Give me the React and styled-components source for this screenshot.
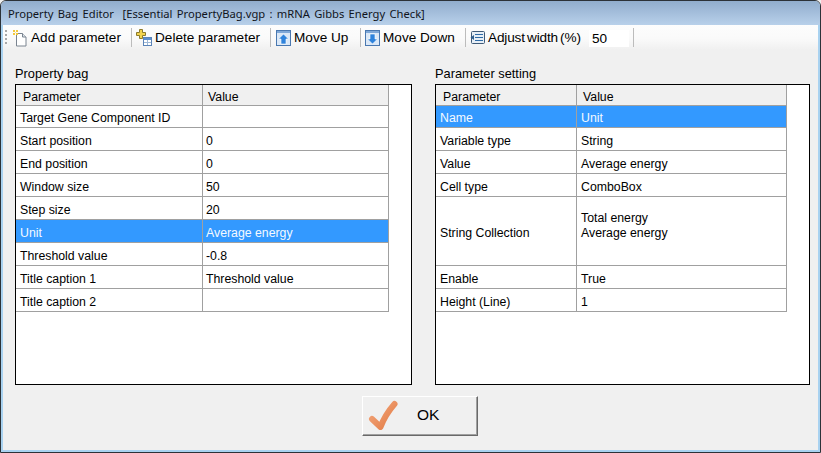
import React from 'react';
import styled, { createGlobalStyle } from 'styled-components';

const GlobalStyle = createGlobalStyle`
    html, body {
        margin: 0;
        padding: 0;
        background: #f0f0f0;
    }
`;

const Window = styled.div`
    width: 821px;
    height: 453px;
    box-sizing: border-box;
    border: 1px solid #2c3238;
    border-radius: 6px 6px 0 0;
    overflow: hidden;
    display: flex;
    flex-direction: column;
    font-family: "Liberation Sans", Arial, sans-serif;
    color: #000;
    background: #f0f0f0;
`;

const TitleBar = styled.div`
    height: 24px;
    flex: none;
    display: flex;
    align-items: center;
    padding-left: 7px;
    font-family: "Noto Sans", sans-serif;
    font-size: 11.2px;
    word-spacing: 1.4px;
    color: #10141c;
    white-space: pre;
    background: linear-gradient(#91adcd, #b8d0ea);
`;

const Frame = styled.div`
    flex: 1;
    display: flex;
    flex-direction: column;
    border: 2px solid #a9d2f0;
    border-top: 0;
`;

const Toolbar = styled.div`
    height: 25px;
    flex: none;
    display: flex;
    align-items: center;
    padding-left: 2px;
    font-size: 13.6px;
    background: linear-gradient(#fdfdfd 0%, #fafafa 55%, #f0f0f0 100%);
`;

const Grip = styled.div`
    width: 2px;
    height: 16px;
    margin-right: 5px;
    background: repeating-linear-gradient(#a8a8a8 0 2px, transparent 2px 4px);
`;

const ToolButton = styled.div`
    display: flex;
    align-items: center;
    gap: ${p => p.$gap || 3}px;
    width: ${p => p.$width}px;
    padding-left: ${p => p.$inset || 0}px;
    word-spacing: ${p => p.$wordSpacing || 0}px;
    letter-spacing: ${p => p.$tracking || 0}px;
    white-space: nowrap;
`;

const Separator = styled.div`
    width: 1px;
    height: 19px;
    margin: 0 4px;
    flex: none;
    background: #bcbcbc;
`;

const WidthInput = styled.div`
    width: 37px;
    height: 17px;
    margin-top: 2px;
    padding-left: 3px;
    line-height: 17px;
    background: #fff;
`;

const Panels = styled.div`
    display: grid;
    grid-template-columns: 397px 375px;
    column-gap: 23px;
    padding: 15px 0 0 12px;
`;

const Panel = styled.div`
    display: flex;
    flex-direction: column;
`;

const PanelLabel = styled.div`
    height: 19px;
    font-size: 12.8px;
    line-height: 17px;
`;

const GridBox = styled.div`
    height: 301px;
    box-sizing: border-box;
    border: 1px solid #000;
    background: #fff;
`;

const Row = styled.div`
    display: grid;
    grid-template-columns: ${p => p.$columns};
    width: max-content;
    height: ${p => p.$height || 23}px;
    box-sizing: border-box;
    border-bottom: 1px solid #a0a0a0;
    font-size: 12.3px;
    color: ${p => (p.$selected ? '#f4f9ff' : '#000')};
    background: ${p => (p.$selected ? '#3399ff' : '#fff')};

    &:nth-child(2) {
        height: 23px;
        border-top: 1px solid #a0a0a0;
    }
`;

const HeaderRow = styled(Row)`
    height: 20px;
    border-bottom: 0;
    background: #f0f0f0;
`;

const Cell = styled.div`
    display: flex;
    align-items: center;
    box-sizing: border-box;
    padding: 4px 0 ${p => p.$bottom || 0}px ${p => p.$inset || 4}px;
    line-height: 15px;
    border-right: 1px solid #a0a0a0;
    white-space: pre-line;
`;

const HeaderCell = styled(Cell)`
    padding: 5px 0 0 ${p => p.$indent}px;
`;

const Footer = styled.div`
    padding: 11px 0 0 359px;
`;

const OkButton = styled.button`
    width: 116px;
    height: 40px;
    box-sizing: border-box;
    padding: 0 0 2px 5px;
    display: flex;
    align-items: center;
    gap: 17px;
    border: 1px solid;
    border-color: #fff #696969 #696969 #fff;
    box-shadow: inset -1px -1px 0 #a0a0a0;
    background: #f0f0f0;
    font-family: "Liberation Sans", Arial, sans-serif;
    font-size: 15.5px;
    color: #000;
`;

const AddIcon = () => (
    <svg width="16" height="18" viewBox="0 0 16 18">
        <path d="M4.5 4.5h6l3.5 3.5v9h-9.500z" fill="#fff" stroke="#7a8490" />
        <path d="M10.500 4.500v3.500h3.500" fill="#dfe5ec" stroke="#7a8490" />
        <path d="M1 1h2v2h-2zM4 1h2v2h-2zM1 4h2v2h-2zM4 4h2v2h-2z" fill="#f3c93c" />
        <path d="M3 3h1v1h-1z" fill="#fbe99a" />
    </svg>
);

const DeleteIcon = () => (
    <svg width="16" height="17" viewBox="0 0 16 17">
        <path d="M3.500.500h3v3h3v3h-3v3h-3v-3h-3v-3h3z" fill="#f2d34f" stroke="#8b7a2c" />
        <rect x="7.500" y="8.500" width="8" height="8" fill="#fff" stroke="#5b84b8" />
        <rect x="8" y="9" width="7" height="2" fill="#5b8ed0" />
        <path d="M8 13.500h7M11.500 11v5" stroke="#9db8d8" />
    </svg>
);

const ArrowIcon = ({ down }) => (
    <svg width="15" height="16" viewBox="0 0 15 16">
        <rect x=".5" y=".5" width="14" height="15" fill="#dbe8f7" stroke="#4a78b0" />
        <rect x="1" y="1" width="13" height="2" fill="#7fa8d8" />
        <path
            d={down ? 'M5 4h5v5h2.500l-5 5-5-5h2.500z' : 'M7.500 4l5 5h-2.500v5h-5v-5h-2.500z'}
            fill="#2f83dc"
            stroke="#fff"
            strokeWidth=".6"
        />
    </svg>
);

const AdjustIcon = () => (
    <svg width="16" height="15" viewBox="0 0 16 15">
        <rect x="1.500" y="1.500" width="13" height="12" rx="1" fill="#e6eef6" stroke="#3f5a78" />
        <path d="M5 4.500h8M5 7.500h8M5 10.500h8" stroke="#2f6ca8" />
        <path d="M.500 7.500l3.500-2.500v5z" fill="#2f5f90" />
    </svg>
);

const CheckIcon = () => (
    <svg width="32" height="30" viewBox="0 0 32 30">
        <defs>
            <linearGradient id="okCheck" x1="0" y1="0" x2="1" y2="1">
                <stop offset="0" stopColor="#f2a77c" />
                <stop offset="1" stopColor="#e37b45" />
            </linearGradient>
        </defs>
        <path
            d="M4 19l8.500 8c3-8 7-15 14-23"
            fill="none"
            stroke="url(#okCheck)"
            strokeWidth="6"
            strokeLinecap="round"
            strokeLinejoin="round"
        />
    </svg>
);

const bagRows = [
    ['Target Gene Component ID', ''],
    ['Start position', '0'],
    ['End position', '0'],
    ['Window size', '50'],
    ['Step size', '20'],
    ['Unit', 'Average energy', true],
    ['Threshold value', '-0.8'],
    ['Title caption 1', 'Threshold value'],
    ['Title caption 2', ''],
];

const settingRows = [
    ['Name', 'Unit', true],
    ['Variable type', 'String'],
    ['Value', 'Average energy'],
    ['Cell type', 'ComboBox'],
    ['String Collection', 'Total energy\nAverage energy', false, 69],
    ['Enable', 'True'],
    ['Height (Line)', '1'],
];

const PropertyGrid = ({ label, columns, rows, valueIndent, valueInset }) => (
    <Panel>
        <PanelLabel>{label}</PanelLabel>
        <GridBox>
            <HeaderRow $columns={columns}>
                <HeaderCell $indent={7}>Parameter</HeaderCell>
                <HeaderCell $indent={valueIndent}>Value</HeaderCell>
            </HeaderRow>
            {rows.map(([name, value, selected, height]) => (
                <Row key={name} $columns={columns} $selected={selected} $height={height}>
                    <Cell>{name}</Cell>
                    <Cell $inset={valueInset} $bottom={height ? 15 : 0}>{value}</Cell>
                </Row>
            ))}
        </GridBox>
    </Panel>
);

const App = () => (
    <>
        <GlobalStyle />
        <Window>
            <TitleBar>{'Property Bag Editor  [Essential PropertyBag.vgp : mRNA Gibbs Energy Check]'}</TitleBar>
            <Frame>
                <Toolbar>
                    <Grip />
                    <ToolButton $width={115}><AddIcon />Add parameter</ToolButton>
                    <Separator />
                    <ToolButton $width={130}><DeleteIcon />Delete parameter</ToolButton>
                    <Separator />
                    <ToolButton $width={80} $inset={1}><ArrowIcon />Move Up</ToolButton>
                    <Separator />
                    <ToolButton $width={96}><ArrowIcon down />Move Down</ToolButton>
                    <Separator />
                    <ToolButton $width={119} $gap={2} $wordSpacing={-1.5} $tracking={-0.15}><AdjustIcon />Adjust width (%)</ToolButton>
                    <WidthInput>50</WidthInput>
                    <Separator />
                </Toolbar>
                <Panels>
                    <PropertyGrid label="Property bag" columns="187px 186px" rows={bagRows} valueIndent={5} valueInset={3} />
                    <PropertyGrid label="Parameter setting" columns="141px 210px" rows={settingRows} valueIndent={6} valueInset={4} />
                </Panels>
                <Footer>
                    <OkButton><CheckIcon />OK</OkButton>
                </Footer>
            </Frame>
        </Window>
    </>
);

export default App;
